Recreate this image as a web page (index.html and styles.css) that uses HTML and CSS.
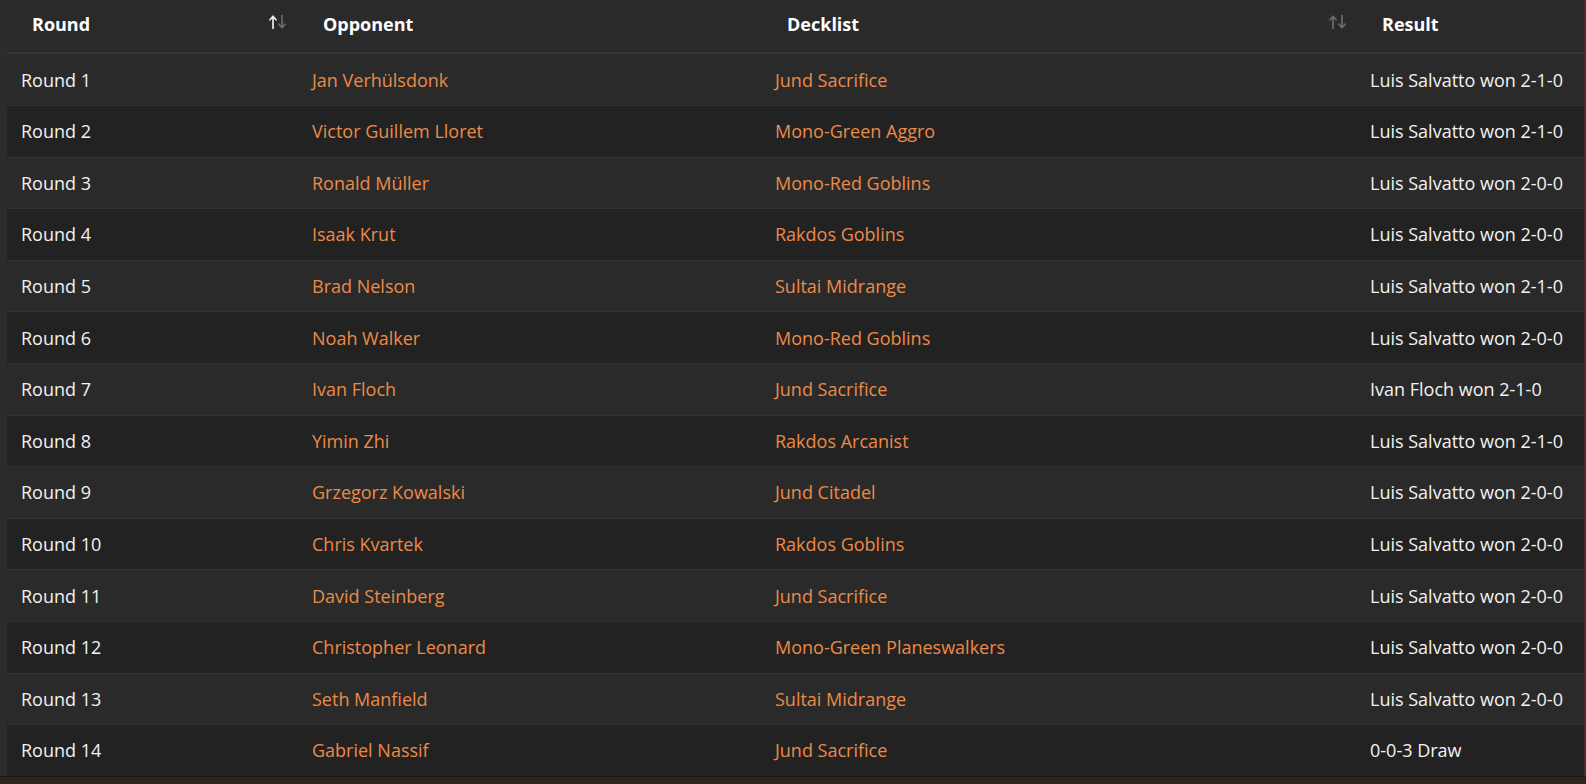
FILE: index.html
```html
<!DOCTYPE html>
<html lang="en">
<head>
<meta charset="utf-8">
<title>Rounds</title>
<link rel="stylesheet" href="styles.css">
</head>
<body>
<div class="page">
  <div class="frame">
    <div class="gutter"></div>
    <div class="table">
      <div class="row head">
        <div class="th sortable"><span>Round</span>
          <svg class="sort" width="17" height="14" viewBox="0 0 17 14"><path class="up active" d="M4 13.5V1.5M1 4.8L4 1.2L7 4.8"/><path class="down" d="M13 0.5V12.5M10 9.2L13 12.8L16 9.2"/></svg>
        </div>
        <div class="th"><span>Opponent</span></div>
        <div class="th sortable"><span>Decklist</span>
          <svg class="sort" width="17" height="14" viewBox="0 0 17 14"><path class="up" d="M4 13.5V1.5M1 4.8L4 1.2L7 4.8"/><path class="down" d="M13 0.5V12.5M10 9.2L13 12.8L16 9.2"/></svg>
        </div>
        <div class="th"><span>Result</span></div>
      </div>
      <div class="row"><div class="td">Round 1</div><div class="td link">Jan Verhülsdonk</div><div class="td link">Jund Sacrifice</div><div class="td">Luis Salvatto won 2-1-0</div></div>
      <div class="row"><div class="td">Round 2</div><div class="td link">Victor Guillem Lloret</div><div class="td link">Mono-Green Aggro</div><div class="td">Luis Salvatto won 2-1-0</div></div>
      <div class="row"><div class="td">Round 3</div><div class="td link">Ronald Müller</div><div class="td link">Mono-Red Goblins</div><div class="td">Luis Salvatto won 2-0-0</div></div>
      <div class="row"><div class="td">Round 4</div><div class="td link">Isaak Krut</div><div class="td link">Rakdos Goblins</div><div class="td">Luis Salvatto won 2-0-0</div></div>
      <div class="row"><div class="td">Round 5</div><div class="td link">Brad Nelson</div><div class="td link">Sultai Midrange</div><div class="td">Luis Salvatto won 2-1-0</div></div>
      <div class="row"><div class="td">Round 6</div><div class="td link">Noah Walker</div><div class="td link">Mono-Red Goblins</div><div class="td">Luis Salvatto won 2-0-0</div></div>
      <div class="row"><div class="td">Round 7</div><div class="td link">Ivan Floch</div><div class="td link">Jund Sacrifice</div><div class="td">Ivan Floch won 2-1-0</div></div>
      <div class="row"><div class="td">Round 8</div><div class="td link">Yimin Zhi</div><div class="td link">Rakdos Arcanist</div><div class="td">Luis Salvatto won 2-1-0</div></div>
      <div class="row"><div class="td">Round 9</div><div class="td link">Grzegorz Kowalski</div><div class="td link">Jund Citadel</div><div class="td">Luis Salvatto won 2-0-0</div></div>
      <div class="row"><div class="td">Round 10</div><div class="td link">Chris Kvartek</div><div class="td link">Rakdos Goblins</div><div class="td">Luis Salvatto won 2-0-0</div></div>
      <div class="row"><div class="td">Round 11</div><div class="td link">David Steinberg</div><div class="td link">Jund Sacrifice</div><div class="td">Luis Salvatto won 2-0-0</div></div>
      <div class="row"><div class="td">Round 12</div><div class="td link">Christopher Leonard</div><div class="td link">Mono-Green Planeswalkers</div><div class="td">Luis Salvatto won 2-0-0</div></div>
      <div class="row"><div class="td">Round 13</div><div class="td link">Seth Manfield</div><div class="td link">Sultai Midrange</div><div class="td">Luis Salvatto won 2-0-0</div></div>
      <div class="row"><div class="td">Round 14</div><div class="td link">Gabriel Nassif</div><div class="td link">Jund Sacrifice</div><div class="td">0-0-3 Draw</div></div>
    </div>
    <div class="edge"></div>
  </div>
  <div class="floor"></div>
</div>
</body>
</html>
```

FILE: styles.css
```css
html, body {
  margin: 0;
  padding: 0;
  background: #2c2c2c;
}

body {
  width: 1586px;
  height: 784px;
  overflow: hidden;
  font-family: "Open Sans", "Noto Sans", sans-serif;
  font-size: 18px;
  color: #f2f2f2;
}

.page {
  display: flex;
  flex-direction: column;
  height: 784px;
}

.frame {
  display: flex;
  flex: 0 0 auto;
}

.gutter {
  width: 7px;
  flex: 0 0 7px;
  background: #2c2c2c;
}

.edge {
  width: 2px;
  flex: 0 0 2px;
  background: #4a2b27;
}

.table {
  width: 1577px;
  flex: 0 0 1577px;
  display: flex;
  flex-direction: column;
}

.row {
  display: grid;
  grid-template-columns: 291px 463px 595px 228px;
  align-items: center;
  height: 51.6px;
  box-sizing: border-box;
  border-top: 1px solid #323232;
  background: #2a2a2a;
}

.row:nth-child(odd) {
  background: #222222;
}

.row.head {
  height: 54px;
  border-top: 0;
  border-bottom: 2px solid #353535;
  background: #2a2a2a;
  padding-bottom: 5px;
}

.row.head + .row {
  border-top: 0;
  height: 51px;
}

.th {
  display: flex;
  align-items: center;
  justify-content: space-between;
  padding-left: 25px;
  padding-right: 12px;
  font-weight: 700;
  color: #ffffff;
  white-space: nowrap;
}

.th:nth-child(3),
.th:nth-child(4) {
  padding-left: 26px;
  padding-right: 10px;
}

.sort {
  display: block;
  margin-top: -3px;
}

.sort path {
  fill: none;
  stroke: #6b6b6b;
  stroke-width: 1.7;
  stroke-linecap: round;
  stroke-linejoin: round;
}

.sort path.active {
  stroke: #e8e8e8;
}

.td {
  padding-left: 14px;
  white-space: nowrap;
}

.td.link {
  color: #ec8a47;
}

.floor {
  flex: 1 1 auto;
  border-top: 1px solid #171717;
  background: #2e2523;
}
```
